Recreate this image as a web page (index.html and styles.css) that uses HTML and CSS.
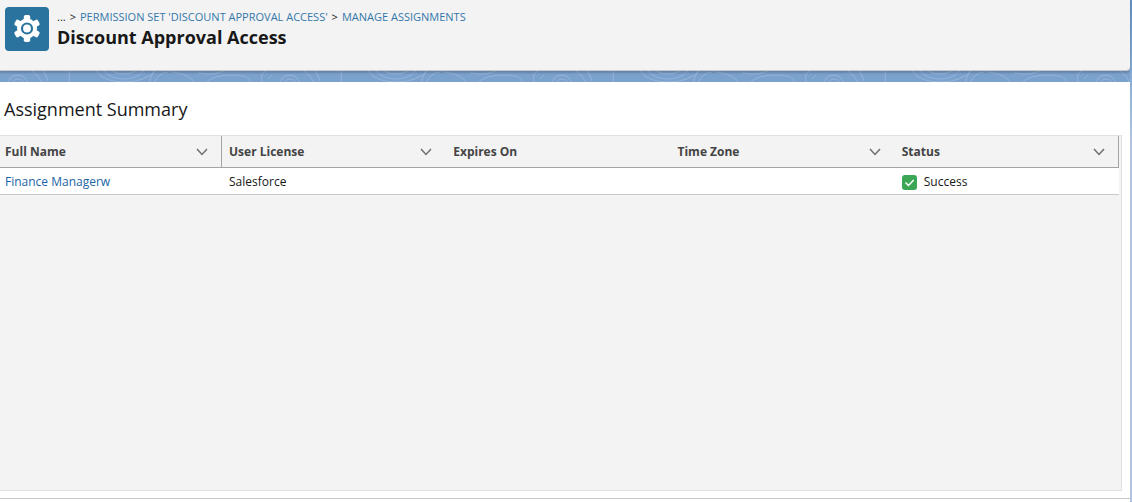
FILE: index.html
```html
<!DOCTYPE html>
<html lang="en">
<head>
<meta charset="utf-8">
<title>Discount Approval Access</title>
<link rel="stylesheet" href="styles.css">
</head>
<body>
<div class="page">
  <header class="page-header">
    <span class="header-icon">
      <svg viewBox="0 0 44 44" aria-hidden="true">
        <g fill="#fff">
          <circle cx="22" cy="21.500" r="10"/>
          <rect x="18.800" y="8" width="6.400" height="27" rx="1.800"/>
          <rect x="18.800" y="8" width="6.400" height="27" rx="1.800" transform="rotate(60 22 21.500)"/>
          <rect x="18.800" y="8" width="6.400" height="27" rx="1.800" transform="rotate(120 22 21.500)"/>
        </g>
        <circle cx="22" cy="21.500" r="5" fill="#fff" stroke="#2a739e" stroke-width="2.200"/>
      </svg>
    </span>
    <div class="header-text">
      <nav class="breadcrumb" aria-label="Breadcrumb">
        <span>...</span>
        <span>&gt;</span>
        <a href="#">PERMISSION SET 'DISCOUNT APPROVAL ACCESS'</a>
        <span>&gt;</span>
        <a href="#">MANAGE ASSIGNMENTS</a>
      </nav>
      <h1 class="title">Discount Approval Access</h1>
    </div>
  </header>

  <div class="band">
    <svg class="band-lines" aria-hidden="true">
      <defs>
        <pattern id="contours" width="272" height="12" patternUnits="userSpaceOnUse">
          <g fill="none" stroke="#94b4d8" stroke-width="1">
            <circle cx="18" cy="14" r="6"/>
            <circle cx="18" cy="14" r="10"/>
            <path d="M32 0Q39 4 42 12M43 0Q47 5 48 10M69 0Q70 6 69 12"/>
            <path d="M96 0Q104 11 124 11T156 0M104 0Q112 8 124 8T144 0M112 0Q123 6 136 0"/>
            <path d="M149 12Q151 5 154 0M154 12Q158 2 168 1M172 1Q190 3 195 12"/>
            <path d="M198 2Q212 5 224 0M206 12Q212 4 232 4T250 12M262 12Q260 4 265 0M268 8L272 4"/>
          </g>
        </pattern>
      </defs>
      <rect width="100%" height="12" fill="url(#contours)"/>
    </svg>
  </div>

  <main class="content">
    <h2 class="section-title">Assignment Summary</h2>
    <div class="panel">
      <table class="grid">
        <colgroup><col class="col-name"><col><col><col><col></colgroup>
        <thead>
          <tr>
            <th class="divided"><div class="head-cell">Full Name<button class="menu" type="button" aria-label="Full Name column menu"><svg viewBox="0 0 12 8"><path d="M1 1L6 6.500L11 1"/></svg></button></div></th>
            <th><div class="head-cell">User License<button class="menu" type="button" aria-label="User License column menu"><svg viewBox="0 0 12 8"><path d="M1 1L6 6.500L11 1"/></svg></button></div></th>
            <th><div class="head-cell">Expires On</div></th>
            <th><div class="head-cell">Time Zone<button class="menu" type="button" aria-label="Time Zone column menu"><svg viewBox="0 0 12 8"><path d="M1 1L6 6.500L11 1"/></svg></button></div></th>
            <th class="divided"><div class="head-cell">Status<button class="menu" type="button" aria-label="Status column menu"><svg viewBox="0 0 12 8"><path d="M1 1L6 6.500L11 1"/></svg></button></div></th>
          </tr>
        </thead>
        <tbody>
          <tr>
            <td><a href="#">Finance Managerw</a></td>
            <td>Salesforce</td>
            <td></td>
            <td></td>
            <td><span class="status"><svg viewBox="0 0 15 15" aria-hidden="true"><rect width="15" height="15" rx="3" fill="#3ba755"/><path d="M3.500 7.500L6.500 10.500L11.700 5" fill="none" stroke="#fff" stroke-width="1.500"/></svg>Success</span></td>
          </tr>
        </tbody>
      </table>
    </div>
  </main>
</div>
</body>
</html>
```
FILE: styles.css
```css
* {
  box-sizing: border-box;
}

body {
  margin: 0;
  background: #b0c4df;
  color: #181818;
  font-family: "Segoe UI", "Open Sans", "Noto Sans", sans-serif;
  font-size: 12px;
  line-height: 16px;
}

a {
  color: #1b65a6;
  text-decoration: none;
}

.page {
  display: flex;
  flex-direction: column;
  min-height: 100vh;
  padding-right: 2px;
  background: linear-gradient(#5f8fc4, #8aaed5 82px, #b0c4df 140px);
}

.page-header {
  position: relative;
  display: flex;
  gap: 8px;
  min-height: 71px;
  padding: 7px 5px;
  background: #f3f3f3;
  border-bottom: 1px solid #c9c9c9;
  border-radius: 0 0 4px 0;
  box-shadow: 0 2px 2px rgba(0, 0, 0, 0.18);
}

.header-icon {
  width: 44px;
  height: 44px;
  border-radius: 4px;
  background: #2a739e;
}

.header-icon svg {
  display: block;
}

.breadcrumb {
  display: flex;
  gap: 4px;
  padding-top: 2px;
  font-size: 11px;
}

.breadcrumb a {
  color: #3478ab;
}

.title {
  margin: 0;
  font-size: 18px;
  line-height: 24px;
}

.band {
  height: 11px;
  background: #7ba1cd;
}

.band-lines {
  display: block;
  width: 100%;
  height: 11px;
}

.content {
  display: flex;
  flex: 1;
  flex-direction: column;
  margin-bottom: 3px;
  padding: 15px 8px 7px 0;
  background: #fff;
  border-bottom: 1px solid #c4c6cc;
  box-shadow: 0 3px #fff;
}

.section-title {
  margin: 0 0 14px;
  padding-left: 4px;
  font-size: 18px;
  font-weight: 400;
  line-height: 24px;
}

.panel {
  flex: 1;
  padding-right: 2px;
  background: #f3f3f3;
  border: solid #e0e0e0;
  border-width: 1px 1px 1px 0;
}

.grid {
  width: 100%;
  border-collapse: separate;
  border-spacing: 0;
  table-layout: fixed;
}

.col-name {
  width: 222px;
}

.grid th,
.grid td {
  padding: 0 0 0 7px;
  text-align: left;
}

.grid th {
  height: 32px;
  border-bottom: 1px solid #a5a5a5;
  color: #444;
}

.grid th:first-child,
.grid td:first-child {
  padding-left: 5px;
}

.grid td {
  height: 27px;
  padding-top: 2px;
  background: #fff;
  border-bottom: 1px solid #c9c9c9;
}

.head-cell {
  display: flex;
  align-items: center;
  justify-content: space-between;
  height: 31px;
  padding-right: 14px;
}

.divided .head-cell {
  padding-right: 13px;
  border-right: 1px solid #a5a5a5;
}

.menu {
  display: flex;
  width: 12px;
  padding: 0;
  background: none;
  border: 0;
}

.menu svg {
  width: 12px;
  height: 8px;
  fill: none;
  stroke: #706e6b;
  stroke-width: 1.5px;
}

.status {
  display: flex;
  align-items: center;
  gap: 7px;
}

.status svg {
  width: 15px;
  height: 15px;
}
```
